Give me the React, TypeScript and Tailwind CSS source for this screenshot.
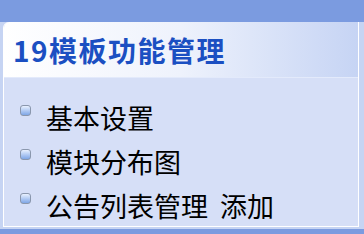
import React from "react";

const items = ["基本设置", "模块分布图"];

function Bullet() {
  return (
    <span className="mt-[1px] block h-[11px] w-[11px] shrink-0 rounded-[3px] border border-[#8a97ad] bg-gradient-to-b from-[#e9f1ff] to-[#7fa6e6]" />
  );
}

export default function App() {
  return (
    <div
      className="flex h-[234px] w-[364px] flex-col overflow-hidden bg-[#c6d4f3]"
      style={{ fontFamily: "'Noto Sans CJK SC', 'Liberation Sans', sans-serif" }}
    >
      {/* top band */}
      <div className="h-[22px] shrink-0 bg-[#7b9be0]" />

      {/* panel */}
      <div className="ml-[3px] mr-[5px] flex h-[205px] flex-col overflow-hidden rounded-tl-[6px] border-x border-b border-white">
        <div className="flex h-[56px] shrink-0 items-center border-b border-[#e3eafb] bg-gradient-to-r from-white via-[#eef2fc] to-[#c6d4f4] pl-[9px]">
          <span className="text-[28px] font-bold leading-none tracking-[1.5px] text-[#1b4fc2]">
            19模板功能管理
          </span>
        </div>
        <div className="flex flex-1 flex-col gap-[16px] bg-[#d6dff7] pl-[16px] pt-[26px]">
          {items.map((t) => (
            <div key={t} className="flex items-start gap-[15px]">
              <Bullet />
              <span className="text-[27px] leading-[28px] text-black">{t}</span>
            </div>
          ))}
          <div className="flex items-start gap-[15px]">
            <Bullet />
            <span className="text-[27px] leading-[28px] text-black">
              公告列表管理<span className="ml-[12px]">添加</span>
            </span>
          </div>
        </div>
      </div>

      {/* bottom band */}
      <div className="mt-[2px] flex-1 bg-[#7b9be0]" />
    </div>
  );
}
